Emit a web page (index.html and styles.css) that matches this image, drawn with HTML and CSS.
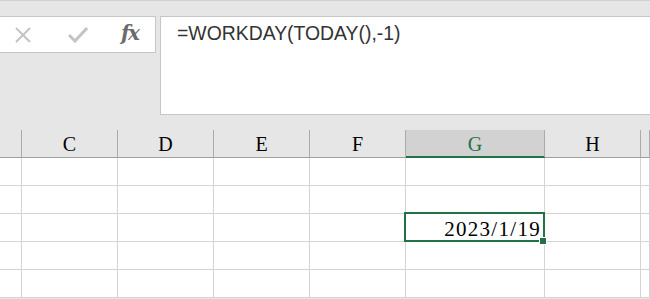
FILE: index.html
```html
<!DOCTYPE html>
<html lang="en">
<head>
  <meta charset="UTF-8" />
  <title>WORKDAY</title>
  <link rel="stylesheet" href="styles.css">
</head>
<body>

  <div class="formula-bar">
    <div class="tools">
      <svg class="icon" width="18" height="18" viewBox="0 0 18 18">
        <path d="M2 2 L16 16 M16 2 L2 16" stroke="#c3c3c3" stroke-width="2" fill="none"/>
      </svg>
      <svg class="icon" width="20" height="16" viewBox="0 0 20 16">
        <path d="M1 8 L7 14 L19 1" stroke="#c3c3c3" stroke-width="3" fill="none"/>
      </svg>
      <span class="fx">fx</span>
    </div>
    <div class="input">=WORKDAY(TODAY(),-1)</div>
  </div>

  <div class="sheet">
    <div class="head"></div>
    <div class="head">C</div>
    <div class="head">D</div>
    <div class="head">E</div>
    <div class="head">F</div>
    <div class="head active">G</div>
    <div class="head">H</div>
    <div class="head last"></div>

    <div class="cell"></div><div class="cell"></div><div class="cell"></div><div class="cell"></div><div class="cell"></div><div class="cell"></div><div class="cell"></div><div class="cell"></div>
    <div class="cell"></div><div class="cell"></div><div class="cell"></div><div class="cell"></div><div class="cell"></div><div class="cell"></div><div class="cell"></div><div class="cell"></div>
    <div class="cell"></div><div class="cell"></div><div class="cell"></div><div class="cell"></div><div class="cell"></div>
    <div class="cell selected">2023/1/19<span class="handle"></span></div>
    <div class="cell"></div><div class="cell"></div>
    <div class="cell"></div><div class="cell"></div><div class="cell"></div><div class="cell"></div><div class="cell"></div><div class="cell"></div><div class="cell"></div><div class="cell"></div>
    <div class="cell"></div><div class="cell"></div><div class="cell"></div><div class="cell"></div><div class="cell"></div><div class="cell"></div><div class="cell"></div><div class="cell"></div>
  </div>

</body>
</html>
```

FILE: styles.css
```css
body {
  margin: 0;
  background: #e6e6e6;
  border-top: 1px solid #d2d2d2;
  height: 298px;
  overflow: hidden;
}

.formula-bar {
  display: flex;
  align-items: flex-start;
  gap: 4px;
  padding-top: 15px;
  height: 114px;
  margin-left: -1px;
}

.tools {
  width: 157px;
  height: 37px;
  box-sizing: border-box;
  background: #fff;
  border: 1px solid #c6c6c6;
  display: flex;
  align-items: center;
  padding-left: 14px;
}

.icon {
  display: block;
}

.tools .icon:nth-child(2) {
  margin-left: 36px;
}

.fx {
  margin-left: 33px;
  font-family: "DejaVu Serif", serif;
  font-style: italic;
  font-weight: bold;
  font-size: 20px;
  color: #6a6a6a;
  letter-spacing: -1.5px;
  margin-top: -4px;
}

.input {
  flex: 1;
  height: 99px;
  box-sizing: border-box;
  background: #fff;
  border: 1px solid #c6c6c6;
  border-right: none;
  padding: 5px 0 0 16px;
  font-family: "Liberation Sans", sans-serif;
  font-size: 19.4px;
  color: #333;
}

.sheet {
  display: grid;
  grid-template-columns: 22px 96px 96px 96px 96px 139px 96px 1fr;
  grid-auto-rows: 28px;
  font-family: "Liberation Serif", serif;
  font-size: 20px;
}

.head {
  box-sizing: border-box;
  border-right: 1px solid #ababab;
  border-bottom: 1px solid #9e9e9e;
  text-align: center;
  line-height: 29px;
  color: #000;
}

.head.active {
  background: #d2d2d2;
  color: #217346;
  border-bottom: 2px solid #217346;
}

.cell {
  box-sizing: border-box;
  background: #fff;
  border-right: 1px solid #d4d4d4;
  border-bottom: 1px solid #d4d4d4;
}

.selected {
  position: relative;
  text-align: right;
  padding-right: 3px;
  line-height: 30px;
  font-size: 21px;
  letter-spacing: 1.3px;
  color: #000;
}

.selected::before {
  content: "";
  position: absolute;
  top: -2px;
  left: -2px;
  right: -1px;
  bottom: -1px;
  border: 2px solid #217346;
}

.handle {
  position: absolute;
  right: -3px;
  bottom: -4px;
  width: 6px;
  height: 6px;
  background: #217346;
  border: 1px solid #fff;
  z-index: 1;
}
```
